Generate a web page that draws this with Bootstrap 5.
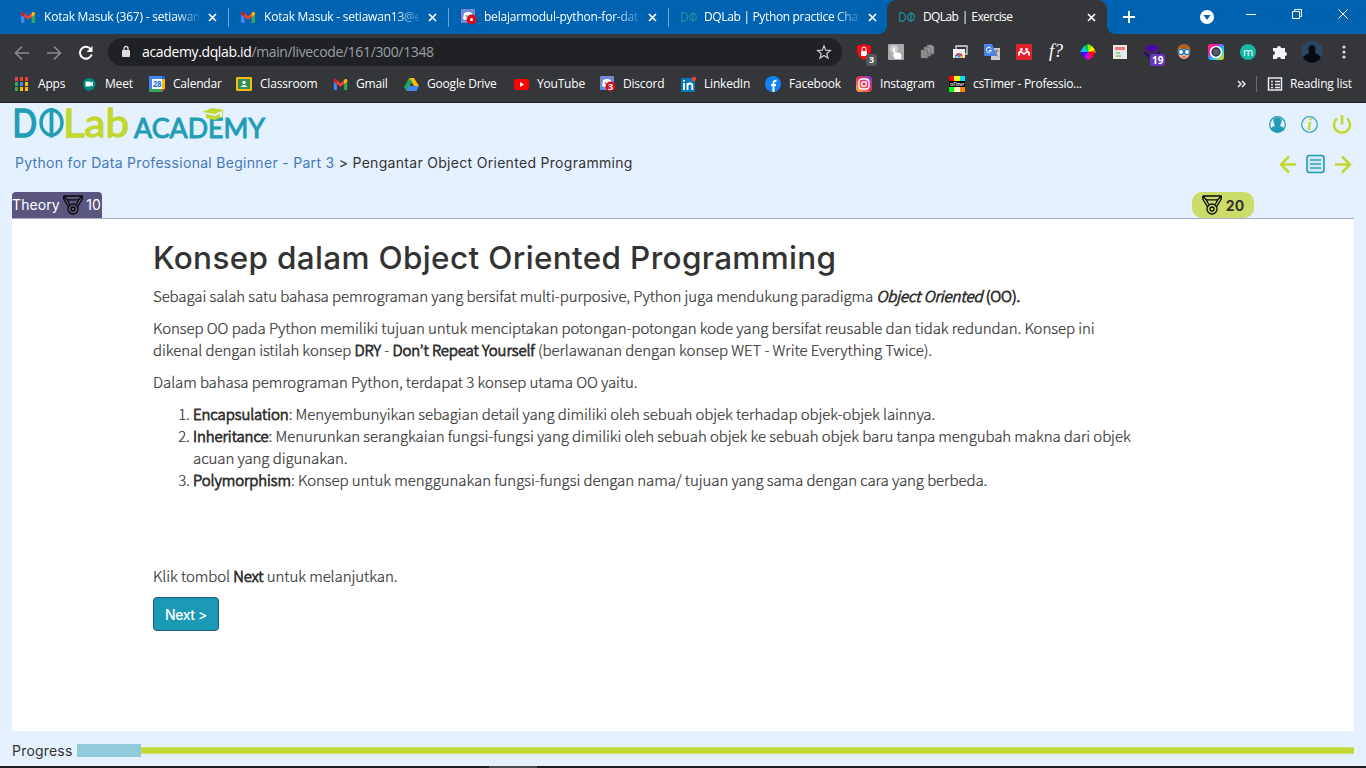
<!DOCTYPE html>
<html lang="id">
<head>
<meta charset="utf-8">
<title>DQLab | Exercise</title>
<link href="https://cdn.jsdelivr.net/npm/bootstrap@5.3.0/dist/css/bootstrap.min.css" rel="stylesheet">
<style>
body{width:1366px;height:768px;overflow:hidden;background:#e5f1ff;font-family:"Open Sans","Noto Sans",sans-serif;color:#333}
svg{display:block;flex:none;overflow:visible}
/* browser frame */
.tabstrip{height:34px;background:#0063b1;font-size:12px;color:#fff;padding-left:9px;letter-spacing:-.22px}
.tab-item{width:220px;height:34px;padding:0 10px 0 12px;gap:9px;border-right:1px solid transparent;position:relative}
.tab-item .cap{width:155px;flex:none;white-space:nowrap}
.tab-item .cap.fade-end{-webkit-mask-image:linear-gradient(90deg,#000 84%,rgba(0,0,0,.15) 100%)}
.tab-item.sep::after{content:"";position:absolute;right:-1px;top:8px;width:1px;height:19px;background:#6aa3d3}
.tab-live{background:#35363a;border-radius:9px 9px 0 0}
.tab-live::before,.tab-live::after{content:"";position:absolute;bottom:0;width:8px;height:8px}
.tab-live::before{left:-8px;background:radial-gradient(circle at 0 0,transparent 7.5px,#35363a 8px)}
.tab-live::after{right:-9px;background:radial-gradient(circle at 100% 0,transparent 7.5px,#35363a 8px)}
.toolbar-row{height:35px;background:#35363a;padding-left:12px}
.omnibox{width:734px;height:28px;border-radius:14px;background:#202124;font-size:14px;color:#9aa0a6;padding:0 11px 0 12px;letter-spacing:-.36px}
.ext-grid{display:grid;grid-template-columns:repeat(16,32px);margin-left:6px}
.ext-grid>div{height:32px;display:flex;align-items:center;justify-content:center;position:relative}
.tag-count{position:absolute;left:18px;top:18px;font-size:9px;line-height:12px;font-weight:700;color:#fff;background:#555659;border-radius:2px;padding:0 3px}
.bookmarks{height:34px;background:#35363a;border-bottom:1px solid #202124;color:#fff;font-size:12px;padding:0 0 3px 15px;letter-spacing:-.2px;white-space:nowrap}
.bm-grid{display:grid;grid-template-columns:67px 67px 87px 97px 71px 110px 86px 81px 84px 91px 93px 292px;align-items:center}
.bm-grid>div{display:flex;align-items:center;gap:8px}
/* lesson page */
.ui-font{font-family:Inter,"Open Sans",sans-serif}
.crumbs{font-size:14px;line-height:20px;white-space:nowrap;letter-spacing:.3px}
.crumbs a{color:#4479b8;text-decoration:none}
.points-tab{width:90px;height:26px;background:#5a567f;border-radius:4px 4px 0 0;color:#fff;font-size:14px;letter-spacing:.1px}
.points-pill{width:62px;height:26px;background:#cbdc69;border-radius:10px;font-size:14px;font-weight:700;margin-right:100px}
.lesson{height:513px;margin:0 12px;background:#fff;border-top:1px solid #a9abc8;padding:21px 0 0 141px;font-family:"Noto Sans CJK JP","Noto Sans CJK SC",sans-serif;font-weight:300;font-size:15px;line-height:22px;white-space:nowrap;letter-spacing:-.075px;-webkit-text-stroke:.2px #333}
.lesson h1{font-family:Inter,sans-serif;font-size:31.5px;line-height:36px;font-weight:500;margin:0 0 9px;color:#333;letter-spacing:.33px;-webkit-text-stroke:0}
.lesson p{margin:0 0 10px}
.lesson ol{padding-left:40px;margin:0 0 74px}
.lesson b{font-weight:300;-webkit-text-stroke:.8px #333}
.btn-next{width:66px;height:34px;background:#1b9ab5;border:1px solid #22567f;border-radius:4px;color:#fff;font-size:14px;font-weight:500;padding:0;letter-spacing:-.4px;-webkit-text-stroke:0}
.btn-next:hover{background:#1b9ab5;color:#fff}
.track{height:7px;background:#c2d835;border-top:1px solid #cfe070;border-bottom:1px solid #cfe070}
.done{width:64px;height:13px;background:#91cbdb}
.taskbar{height:2px;background:#1c1d22}
</style>
</head>
<body class="d-flex flex-column">
<svg width="0" height="0" class="position-absolute">
<defs>
<symbol id="gmail" viewBox="0 0 14 11"><path fill="#4285f4" d="M0 2v8a1 1 0 0 0 1 1h2.400V4.200z"/><path fill="#34a853" d="M14 2v8a1 1 0 0 1-1 1h-2.400V4.200z"/><path fill="#ea4335" d="M0 1.500C0 .2 1.600-.5 2.700.5L7 4.200 11.300.5C12.400-.5 14 .2 14 1.500L10.600 5 7 7.800 3.400 5z"/><path fill="#c5221f" d="M0 1.500C0 .2 1.600-.5 2.700.5l.7.600V5L0 2.500z"/><path fill="#fbbc04" d="M14 1.500C14 .2 12.400-.5 11.300.5l-.7.600V5L14 2.500z"/></symbol>
<symbol id="cross" viewBox="0 0 9 9"><path d="M1 1l7 7M8 1L1 8" stroke="#fff" stroke-width="1.700"/></symbol>
<symbol id="discord" viewBox="0 0 16 16"><rect width="14" height="14" rx="1" fill="#7289da"/><path d="M2 10l1-6 3-1h2l3 1 1 6-2 1H4z" fill="#fff"/><circle cx="5.500" cy="7" r="1" fill="#7289da"/><circle cx="9" cy="7" r="1" fill="#7289da"/><circle cx="10.500" cy="10.500" r="5" fill="#d80d16"/></symbol>
<symbol id="dphi" viewBox="0 0 16 10"><path d="M.7.700V9.300H2.500C8 9.300 8 .7 2.500.7zM12 0v10" fill="none" stroke="#218c9e" stroke-width="1.200"/><ellipse cx="12" cy="5" rx="3.300" ry="3.600" fill="none" stroke="#218c9e" stroke-width="1.200"/></symbol>
<symbol id="medal" viewBox="0 0 20 20"><g fill="none" stroke="#0a0a0a" stroke-width="1.300" stroke-linejoin="round"><path d="M.7 1H19.300V3.800L14.500 12M.7 1V3.800L5.500 12M4.300 4.800H15.700L13.300 9.500M4.300 4.800L6.700 9.500M.7 1L4.300 4.800M19.300 1L15.700 4.800"/><circle cx="10" cy="14" r="5"/><circle cx="10" cy="14" r="2"/></g></symbol>
</defs>
</svg>

<header class="flex-shrink-0">
<div class="tabstrip d-flex">
 <div class="tab-item sep d-flex align-items-center"><svg width="14" height="11"><use href="#gmail"/></svg><span class="cap fade-end">Kotak Masuk (367) - setiawan</span><svg width="9" height="9"><use href="#cross"/></svg></div>
 <div class="tab-item sep d-flex align-items-center"><svg width="14" height="11"><use href="#gmail"/></svg><span class="cap fade-end">Kotak Masuk - setiawan13@e</span><svg width="9" height="9"><use href="#cross"/></svg></div>
 <div class="tab-item sep d-flex align-items-center"><svg width="16" height="16" style="margin-right:-2px"><use href="#discord"/><circle cx="10.500" cy="10.500" r="1.500" fill="#fff"/></svg><span class="cap fade-end">belajarmodul-python-for-dat</span><svg width="9" height="9"><use href="#cross"/></svg></div>
 <div class="tab-item d-flex align-items-center" style="width:218px"><svg width="16" height="10" style="margin-right:-2px"><use href="#dphi"/></svg><span class="cap fade-end" style="letter-spacing:-.34px">DQLab | Python practice Chap</span><svg width="9" height="9"><use href="#cross"/></svg></div>
 <div class="tab-item tab-live d-flex align-items-center"><svg width="16" height="10" style="margin-right:-1px"><use href="#dphi"/></svg><span class="cap" style="width:154px;letter-spacing:-.6px;word-spacing:1px">DQLab | Exercise</span><svg width="9" height="9" class="ms-auto me-0"><use href="#cross"/></svg></div>
 <svg width="258" height="34" viewBox="1107 0 258 34" fill="none" stroke="#fff"><path d="M1129 11v12M1123 17h12" stroke-width="2"/><circle cx="1207" cy="17" r="7" fill="#fff" stroke="none"/><path d="M1203.500 15h7l-3.500 5z" fill="#0063b1" stroke="none"/><path d="M1246 14.500h10M1292.500 11.500h7v7h-7zM1294.500 11.500v-2h7v7h-2M1338.500 9.500l9 9M1347.500 9.500l-9 9"/></svg>
</div>

<div class="toolbar-row d-flex align-items-center">
 <svg width="96" height="34" viewBox="12 34 96 34" fill="none" stroke="#8b8c8f" stroke-width="1.600"><path d="M29 52H16M22 45.500L15.500 52l6.500 6.500M47 52h13M54 45.500l6.500 6.500-6.500 6.500"/><path d="M90.700 48a6 6 0 1 0 1 5.500" stroke="#fff" stroke-width="2"/><path d="M92.500 45v6h-6z" fill="#fff" stroke="none"/></svg>
 <div class="omnibox d-flex align-items-center"><svg width="12" height="14" style="margin-right:6px"><rect x="2" y="5" width="8" height="7" rx="1" fill="#ddd"/><path d="M4 5V3.500a2 2 0 0 1 4 0V5" fill="none" stroke="#ddd" stroke-width="1.300"/></svg><span class="ps-1 flex-grow-1"><span class="text-white">academy.dqlab.id</span><span>/main/livecode/161/300/1348</span></span><svg width="14" height="14" viewBox="0 0 14 14"><path d="M7 .8L8.700 5.200l4.700.3-3.600 3 1.200 4.600L7 10.500l-4 2.600 1.200-4.600-3.600-3 4.700-.3z" fill="none" stroke="#ccc" stroke-width="1.200"/></svg></div>
 <div class="ext-grid">
  <div><svg width="16" height="16"><path d="M8 0l7 2v6q-1 5-7 8-6-3-7-8V2z" fill="#f10d16"/><rect x="5" y="7" width="6" height="5" rx="1" fill="#fff"/><path d="M6 7V5a2 2 0 0 1 4 0v2" fill="none" stroke="#fff"/></svg><span class="tag-count">3</span></div>
  <div><svg width="16" height="16"><rect width="16" height="16" rx="1" fill="#aaa"/><circle cx="6" cy="5" r="4" fill="#ccc"/><path d="M5 4q1-1 2 0v4l5 1q2 1 1 6H7L4 10l2 1z" fill="#fff"/></svg></div>
  <div><svg width="16" height="16" fill="#999" stroke="#666" stroke-width=".7"><path d="M7 1h5l2 2v7H7zM4 3h5l2 2v7H4zM1 6h5l2 2v6H1z"/></svg></div>
  <div><svg width="16" height="16"><path d="M4 2h11v8H4z" fill="none" stroke="#ddd" stroke-width="1.300"/><path d="M1 5h12v9H1z" fill="#eee"/><path d="M3 12a4.200 4.200 0 0 1 8 0z" fill="#e94335"/><path d="M3 11l2 3H3z" fill="#34a853"/><path d="M11 11v3H8z" fill="#fbbc04"/><circle cx="7" cy="12" r="1.800" fill="#4285f4"/></svg></div>
  <div><svg width="16" height="16"><rect x="7" y="4" width="9" height="12" fill="#ccc"/><path d="M0 0h8l5 12H1q-1 0-1-1z" fill="#4a83e8"/><path d="M7 4.500a2.500 2.500 0 1 0 .3 2H5" fill="none" stroke="#fff"/><path d="M10 7h5M12.500 5.500V7q0 3-2 5M11 8.500q1 3 3.500 4" fill="none" stroke="#6b7888"/></svg></div>
  <div><svg width="16" height="16"><rect width="16" height="16" fill="#e11f2d"/><path d="M3 11.500V9q1-2.500 2.500-.8L8 10l2.500-1.800Q12 6.500 13 9v2.500" fill="none" stroke="#fff" stroke-width="1.800"/><circle cx="5.500" cy="5.500" r="1.400" fill="#fff"/><circle cx="10.500" cy="5.500" r="1.400" fill="#fff"/></svg></div>
  <div class="text-white" style="font:italic 18px 'Liberation Serif',serif">f?</div>
  <div><svg width="16" height="16"><path d="M8 8L8 0 4 2z" fill="#0c3"/><path d="M8 8V0l4 2z" fill="#8e0"/><path d="M8 8l4-6 3 4z" fill="#ff0"/><path d="M8 8l7-2 1 3z" fill="#f80"/><path d="M8 8l7 0-2 5z" fill="#f02"/><path d="M8 8l5 5-5 3z" fill="#f08"/><path d="M8 8v8l-4-3z" fill="#c0f"/><path d="M8 8l-4 5-4-5z" fill="#40f"/><path d="M8 8H0l4-6z" fill="#0cf"/></svg></div>
  <div><svg width="14" height="14"><rect width="14" height="14" fill="#e9e9e9"/><path d="M2 3.500h10" stroke="#f2767b" stroke-width="3"/><path d="M3 8h4M3 11h5" stroke="#7c6" stroke-width="1.400"/></svg></div>
  <div><svg width="16" height="16"><path d="M8 0l8 4-8 5-8-5z" fill="#4a0aa5"/><path d="M0 7l8 5 8-5v3l-8 5-8-5z" fill="#310b75"/></svg><span class="tag-count" style="left:14px;background:#6937bd;font-size:10px;padding:0 2px">19</span></div>
  <div><svg width="14" height="16"><ellipse cx="7" cy="8" rx="6" ry="7" fill="#f5b78c"/><path d="M0 9q0-9 7-9t7 9L11 4Q7 7 3 4z" fill="#a8601b"/><circle cx="4" cy="8" r="2.600" fill="#fff" stroke="#2176bd" stroke-width="1.300"/><circle cx="10" cy="8" r="2.600" fill="#fff" stroke="#2176bd" stroke-width="1.300"/><path d="M5 13h4" stroke="#b45"/></svg></div>
  <div><svg width="16" height="16"><defs><linearGradient id="rb" x2="1" y2="1"><stop stop-color="#ff4d4d"/><stop offset=".25" stop-color="#f0b"/><stop offset=".6" stop-color="#0cf"/><stop offset="1" stop-color="#fd0"/></linearGradient></defs><rect width="16" height="16" rx="3" fill="url(#rb)"/><circle cx="8" cy="8" r="5.500" fill="#303943" stroke="#fff" stroke-width="1.700"/><circle cx="8" cy="8" r="3" fill="#53616e"/></svg></div>
  <div><svg width="16" height="16"><circle cx="8" cy="8" r="8" fill="#12b8a8"/><text x="8" y="11.500" fill="#fff" font-size="11" text-anchor="middle">m</text></svg></div>
  <div><svg width="16" height="16"><path d="M1 4h4a2 2 0 1 1 4 0h4v4a2 2 0 1 1 0 4v3H9a2 2 0 1 0-4 0H1v-4a2 2 0 1 0 0-4z" fill="#f1f3f4"/></svg></div>
  <div><svg width="22" height="22"><circle cx="11" cy="11" r="11" fill="#2b4763"/><path d="M2 17q1-3 6-5-2-8 3-8t3 8q5 2 6 5a11 11 0 0 1-18 0z" fill="#080c12"/></svg></div>
  <div><svg width="4" height="14" fill="#ddd"><circle cx="2" cy="2" r="1.600"/><circle cx="2" cy="7" r="1.600"/><circle cx="2" cy="12" r="1.600"/></svg></div>
 </div>
</div>

<div class="bookmarks d-flex align-items-center">
 <div class="bm-grid">
  <div><svg width="15" height="14"><path d="M0 0h3v4H0zM5 0h3v4H5zM10 0h3v4h-3z" fill="#ea4335"/><path d="M0 5h3v4H0zM0 10h3v4H0z" fill="#34a853"/><path d="M5 5h3v4H5z" fill="#4285f4"/><path d="M10 5h3v4h-3zM5 10h3v4H5zM10 10h3v4h-3z" fill="#fbbc04"/></svg><span>Apps</span></div>
  <div><svg width="15" height="15"><path d="M7 1a6.200 6.200 0 1 1-.5 12.300V15l-2-2.300A6.200 6.200 0 0 1 7 1z" fill="#00897b"/><path d="M3.500 4.500h5V6L11 4.500v5L8.500 8v1.500h-5z" fill="#fff"/></svg><span>Meet</span></div>
  <div><svg width="16" height="16"><path d="M0 0h13v3H3v13H0z" fill="#4285f4"/><path d="M13 0h3v13h-3z" fill="#fbbc04"/><path d="M13 0h3v3h-3z" fill="#1967d2"/><path d="M0 13h13v3H0z" fill="#34a853"/><path d="M13 13h3l-3 3z" fill="#ea4335"/><rect x="3" y="3" width="10" height="10" fill="#fff"/><text x="8" y="11" font-size="8" font-weight="700" fill="#1967d2" text-anchor="middle">28</text></svg><span>Calendar</span></div>
  <div><svg width="16" height="15"><rect width="16" height="14" rx="1" fill="#f6b90c"/><rect x="2" y="2" width="12" height="10" fill="#2d9156"/><circle cx="8" cy="5.500" r="1.700" fill="#fff"/><path d="M4.500 10q3.500-4 7 0z" fill="#fff"/></svg><span>Classroom</span></div>
  <div><svg width="15" height="11" viewBox="0 0 14 11"><use href="#gmail" width="14" height="11"/></svg><span>Gmail</span></div>
  <div><svg width="15" height="13"><path d="M5 0h5l5 8h-5z" fill="#fbbc04"/><path d="M5 0L0 9l2.500 4L8 4z" fill="#1fa463"/><path d="M5 8h10l-2.500 5h-10z" fill="#4285f4"/></svg><span>Google Drive</span></div>
  <div><svg width="15" height="11"><rect width="15" height="11" rx="2" fill="#f00"/><path d="M6 3l4 2.500L6 8z" fill="#fff"/></svg><span>YouTube</span></div>
  <div><svg width="15" height="16"><use href="#discord" width="16" height="16"/><text x="10.500" y="14" font-size="9" font-weight="700" fill="#fff" text-anchor="middle">3</text></svg><span>Discord</span></div>
  <div><svg width="15" height="15"><rect y="1" width="14" height="14" rx="1" fill="#0a77b7"/><path d="M3 6v7M6.500 13V6M6.500 9q0-2.500 2.500-2.500T11.300 9v4M3 3v1.500" fill="none" stroke="#fff" stroke-width="1.800"/><circle cx="13" cy="2" r="2.200" fill="#ef4136"/></svg><span>LinkedIn</span></div>
  <div><svg width="16" height="16"><circle cx="8" cy="8" r="8" fill="#1183f7"/><path d="M8.500 16V7q0-2.500 3-2.200M6 9h5" fill="none" stroke="#fff" stroke-width="2"/></svg><span>Facebook</span></div>
  <div><svg width="16" height="16"><defs><linearGradient id="ig" x1="0" y1="1" x2="1" y2="0"><stop stop-color="#fdc14f"/><stop offset=".5" stop-color="#e8325b"/><stop offset="1" stop-color="#7a3bdc"/></linearGradient></defs><rect width="16" height="16" rx="4" fill="url(#ig)"/><rect x="3" y="3" width="10" height="10" rx="3" fill="none" stroke="#fff" stroke-width="1.300"/><circle cx="8" cy="8" r="2.400" fill="none" stroke="#fff" stroke-width="1.300"/><circle cx="11" cy="5" r=".7" fill="#fff"/></svg><span>Instagram</span></div>
  <div><svg width="16" height="16"><path d="M0 0h5v5H0z" fill="red"/><path d="M5 0h6v5H5z" fill="#ff0"/><path d="M11 0h5v5h-5z" fill="#fa0"/><path d="M11 0h5v5h-5z" fill="#0df"/><path d="M0 11h5v5H0z" fill="#0f0"/><path d="M5 11h6v5H5z" fill="#ffc"/><path d="M11 11h5v5h-5z" fill="#f80"/><path d="M0 5h16v6H0z" fill="#000"/><text x="1" y="9.500" font-size="4.500" font-weight="700" fill="#ddd" textLength="14" lengthAdjust="spacingAndGlyphs">csTimer</text></svg><span style="letter-spacing:-.3px">csTimer - Professio...</span></div>
 </div>
 <svg width="49" height="34" viewBox="1240 67 49 34" fill="none" stroke="#e8eaed"><path d="M1237 81l3 3-3 3M1241 81l3 3-3 3" stroke-width="1.500"/><path d="M1255.500 76v16" stroke="#6a6b6e"/><path d="M1267.500 78h13v12h-13zM1270 81.500h2M1274 81.500h5M1270 84.500h2M1274 84.500h5M1270 87.500h2M1274 87.500h5" stroke-width="1.500"/></svg>
 <span>Reading list</span>
</div>
</header>

<main class="flex-grow-1 d-flex flex-column">
 <div class="d-flex justify-content-between" style="height:45px;padding:3px 14px 0 14px">
  <svg width="254" height="38" viewBox="14 106 254 38" font-family="Lato,sans-serif" fill="#229db5" stroke="#229db5"><text x="12.500" y="136.500" font-size="39" textLength="24.500" lengthAdjust="spacingAndGlyphs" stroke-width="1.600">D</text><ellipse cx="51.500" cy="122.500" rx="10.500" ry="12.500" fill="none" stroke-width="3.400"/><path d="M51.500 108v29.500" stroke-width="3.800"/><text x="63" y="136.500" font-size="39" fill="#c1d82f" stroke="#c1d82f" stroke-width="1.300" textLength="66" lengthAdjust="spacingAndGlyphs">Lab</text><text x="134" y="137.500" font-size="27" stroke-width="1" textLength="131" lengthAdjust="spacingAndGlyphs">ACADEMY</text><g stroke="none" fill="#c1d82f"><path d="M202 112l10-4 12 2-9 4zM206 114l9 2 5-2v4l-5 2-9-2z"/><path d="M222.500 110.500v7" stroke="#c1d82f"/></g></svg>
  <svg width="84" height="38" viewBox="1268 106 84 38" fill="none"><circle cx="1277.500" cy="124.500" r="7.800" stroke="#2b9db5" stroke-width="1.300"/><path d="M1270.500 129.500q1-3 4.500-3.500-4.500-8.500 2.500-8.800 7 .3 2.500 8.800 3.500.5 4.500 3.500-7 5.500-14 0z" fill="#229db5"/><circle cx="1309.500" cy="124.500" r="7.800" stroke="#3ba9bd" stroke-width="1.300"/><text x="1309.500" y="130" font-family="Liberation Serif,serif" font-style="italic" font-weight="700" font-size="17" text-anchor="middle" fill="#c1d82f">i</text><path d="M1337 118.500a8 8 0 1 0 10 0M1342 115v9.500" stroke="#c1d82f" stroke-width="2.600"/></svg>
 </div>
 <div class="ui-font d-flex justify-content-between align-items-center" style="height:30px;padding:0 14px 0 15px">
  <div class="crumbs"><a href="#">Python for Data Professional Beginner - Part 3</a> &gt; Pengantar Object Oriented Programming</div>
  <svg width="73" height="24" viewBox="1279 150.500 73 24" fill="none" stroke="#c1d82f" stroke-width="2.500"><path d="M1296 164h-14M1289 156l-8 8 8 8M1335 164h14M1342 156l8 8-8 8"/><rect x="1307" y="155" width="17" height="17" rx="2.500" fill="#cfeaf5" stroke="#229db5" stroke-width="1.600"/><path d="M1310 159.500h11M1310 163.500h11M1310 167.500h11" stroke="#3ba3b8" stroke-width="1.300"/></svg>
 </div>
 <div class="ui-font d-flex justify-content-between align-items-end px-2 mx-1" style="height:40px">
  <div class="points-tab d-flex align-items-center justify-content-between" style="padding:0 1px 1px 0"><span>Theory</span><svg width="20" height="20"><use href="#medal"/></svg><span>10</span></div>
  <div class="points-pill d-flex align-items-center justify-content-center"><svg width="20" height="20" class="me-1"><use href="#medal"/></svg>20</div>
 </div>
 <section class="lesson">
  <h1>Konsep dalam Object Oriented Programming</h1>
  <p>Sebagai salah satu bahasa pemrograman yang bersifat multi-purposive, Python juga mendukung paradigma <b><i>Object Oriented</i> (OO).</b></p>
  <p>Konsep OO pada Python memiliki tujuan untuk menciptakan potongan-potongan kode yang bersifat reusable dan tidak redundan. Konsep ini<br>dikenal dengan istilah konsep <b>DRY</b> - <b>Don’t Repeat Yourself</b> (berlawanan dengan konsep WET - Write Everything Twice).</p>
  <p>Dalam bahasa pemrograman Python, terdapat 3 konsep utama OO yaitu.</p>
  <ol>
   <li><b>Encapsulation</b>: Menyembunyikan sebagian detail yang dimiliki oleh sebuah objek terhadap objek-objek lainnya.</li>
   <li><b>Inheritance</b>: Menurunkan serangkaian fungsi-fungsi yang dimiliki oleh sebuah objek ke sebuah objek baru tanpa mengubah makna dari objek<br>acuan yang digunakan.</li>
   <li><b>Polymorphism</b>: Konsep untuk menggunakan fungsi-fungsi dengan nama/ tujuan yang sama dengan cara yang berbeda.</li>
  </ol>
  <p>Klik tombol <b>Next</b> untuk melanjutkan.</p>
  <button class="btn btn-next ui-font">Next &gt;</button>
 </section>
 <div class="ui-font d-flex align-items-center flex-grow-1" style="padding:4px 12px 0"><span style="width:65px;font-size:14px;letter-spacing:.2px">Progress</span><div class="done"></div><div class="track flex-grow-1"></div></div>
 <div class="taskbar"><div style="width:48px;height:2px;margin-left:489px;background:#4b4c50"></div></div>
</main>
<script src="https://cdn.jsdelivr.net/npm/bootstrap@5.3.0/dist/js/bootstrap.bundle.min.js"></script>
</body>
</html>
